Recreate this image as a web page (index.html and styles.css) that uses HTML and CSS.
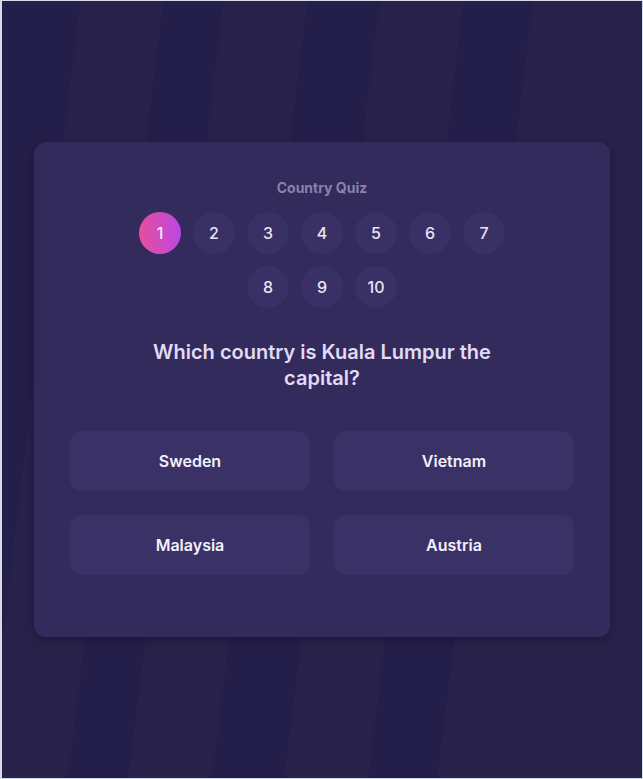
FILE: index.html
```html
<!DOCTYPE html>
<html lang="en">
<head>
<meta charset="utf-8">
<title>Country Quiz</title>
<link rel="stylesheet" href="styles.css">
</head>
<body>
<main class="page">
  <section class="card">
    <h1 class="title">Country Quiz</h1>
    <div class="steps">
      <span class="step active">1</span>
      <span class="step">2</span>
      <span class="step">3</span>
      <span class="step">4</span>
      <span class="step">5</span>
      <span class="step">6</span>
      <span class="step">7</span>
      <span class="step">8</span>
      <span class="step">9</span>
      <span class="step">10</span>
    </div>
    <h2 class="question">Which country is Kuala Lumpur the capital?</h2>
    <div class="answers">
      <button class="answer">Sweden</button>
      <button class="answer">Vietnam</button>
      <button class="answer">Malaysia</button>
      <button class="answer">Austria</button>
    </div>
  </section>
</main>
</body>
</html>
```

FILE: styles.css
```css
html, body {
  margin: 0;
  padding: 0;
}

body {
  background: #d5dbe8;
  font-family: Inter, "Noto Sans", "Liberation Sans", sans-serif;
}

.page {
  box-sizing: border-box;
  margin: 1px 1px 1px 2px;
  height: 777px;
  display: flex;
  align-items: center;
  justify-content: center;
  background: linear-gradient(97deg,
    #241e4a 0 78px,
    #28224b 78px 160px,
    #241e4a 160px 220px,
    #28224b 220px 303px,
    #241e4a 303px 375px,
    #28224b 375px 458px,
    #241e4a 458px 527px,
    #28224b 527px);
}

.card {
  box-sizing: border-box;
  width: 576px;
  height: 495px;
  padding: 36px 36px 62px;
  background: #332b5b;
  border-radius: 12px;
  box-shadow: 0 3px 10px rgba(15, 10, 35, 0.35);
  display: flex;
  flex-direction: column;
  align-items: center;
}

.title {
  margin: 0;
  font-size: 14px;
  line-height: 20px;
  font-weight: 700;
  color: #8a82ad;
}

.steps {
  margin-top: 14px;
  width: 400px;
  display: flex;
  flex-wrap: wrap;
  justify-content: center;
  gap: 12px;
}

.step {
  width: 42px;
  height: 42px;
  border-radius: 50%;
  background: #393065;
  color: #e8e5f4;
  font-size: 16px;
  font-weight: 500;
  display: flex;
  align-items: center;
  justify-content: center;
}

.step.active {
  background: linear-gradient(90deg, #e5509a 0%, #bb46e4 100%);
  color: #f4eefa;
}

.question {
  margin: 31px 0 0;
  width: 360px;
  text-align: center;
  font-size: 20px;
  line-height: 26px;
  font-weight: 600;
  color: #e0dcf5;
}

.answers {
  margin-top: 40px;
  width: 100%;
  display: grid;
  grid-template-columns: 1fr 1fr;
  gap: 24px;
}

.answer {
  height: 60px;
  border: 0;
  border-radius: 12px;
  background: #3a3166;
  color: #f2f0fa;
  font-family: inherit;
  font-size: 16px;
  font-weight: 600;
  cursor: pointer;
}
```
